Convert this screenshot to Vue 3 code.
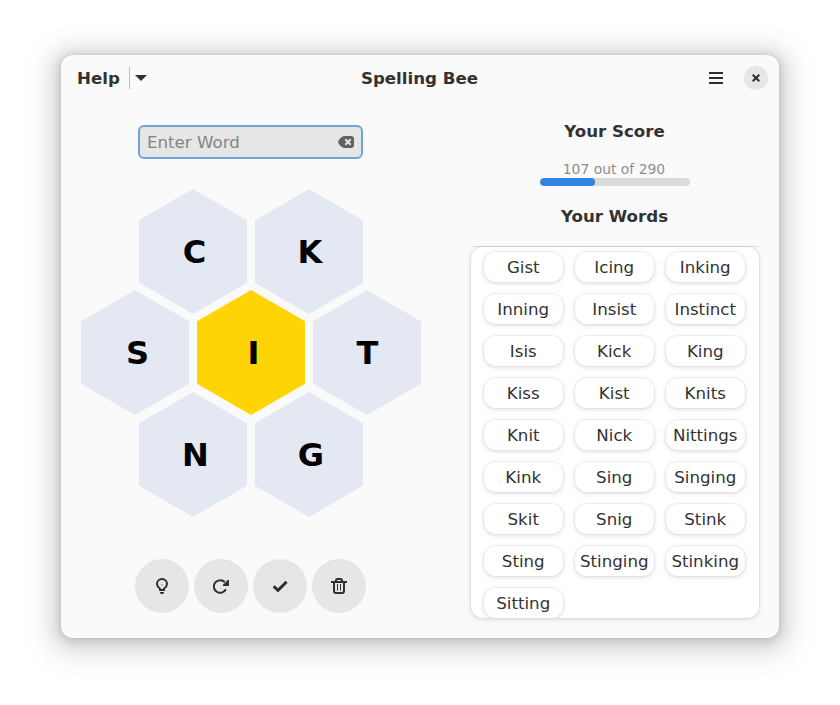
<script setup>
const rows = [
  [{ c: 'C', dx: 0 }, { c: 'K', dx: -0.5 }],
  [{ c: 'S', dx: 1 }, { c: 'I', dx: 1, center: true }, { c: 'T', dx: -1 }],
  [{ c: 'N', dx: 1 }, { c: 'G', dx: 0.5 }],
]
const words = [
  'Gist', 'Icing', 'Inking', 'Inning', 'Insist', 'Instinct', 'Isis', 'Kick', 'King',
  'Kiss', 'Kist', 'Knits', 'Knit', 'Nick', 'Nittings', 'Kink', 'Sing', 'Singing',
  'Skit', 'Snig', 'Stink', 'Sting', 'Stinging', 'Stinking', 'Sitting',
]
const score = 107
const total = 290
</script>

<template>
  <div class="desktop">
    <div class="window">
      <header class="titlebar">
        <div class="side">
          <span class="help">Help</span>
          <span class="divider"></span>
          <svg class="arrow" width="12" height="6" viewBox="0 0 12 6"><path d="M0 0h12L6 6z" fill="#2f2f2f" /></svg>
        </div>
        <h1>Spelling Bee</h1>
        <div class="side end">
          <svg class="menu" width="14" height="12" viewBox="0 0 14 12"><path d="M0 0h14v2H0zM0 5h14v2H0zM0 10h14v2H0z" fill="#2f2f2f" /></svg>
          <button class="close" aria-label="Close">
            <svg width="8" height="8" viewBox="0 0 8 8"><path d="M.7 .7l6.600 6.600M7.300 .7L.7 7.300" stroke="#2f2f2f" stroke-width="2" /></svg>
          </button>
        </div>
      </header>
      <main>
        <section class="play">
          <div class="entry">
            <span>Enter Word</span>
            <svg width="16" height="12" viewBox="0 0 16 12">
              <path d="M6 0h7a3 3 0 0 1 3 3v6a3 3 0 0 1-3 3H6C4.400 12 0 8 0 6S4.400 0 6 0z" fill="#626262" />
              <path d="M7.300 3.300l5.400 5.400M12.700 3.300l-5.400 5.400" stroke="#e6e6e6" stroke-width="2" />
            </svg>
          </div>
          <div class="comb">
            <div v-for="(row, r) in rows" :key="r" class="comb-row">
              <div v-for="l in row" :key="l.c" class="hex" :class="{ center: l.center }">
                <span :style="{ marginLeft: 2 * l.dx + 'px' }">{{ l.c }}</span>
              </div>
            </div>
          </div>
          <div class="actions">
            <button aria-label="Hint">
              <svg width="16" height="16" viewBox="0 0 16 16" fill="none" stroke="#2f2f2f" stroke-width="2">
                <path d="M6 12v-1.300C4.400 9.500 3 8.200 3 6a5 5 0 0 1 10 0c0 2.200-1.400 3.500-3 4.700V12z" />
                <path d="M6 6h4L8 8z" fill="#b9b9b9" stroke="none" />
                <path d="M6 14h4v1l-1 1H7l-1-1z" fill="#2f2f2f" stroke="none" />
              </svg>
            </button>
            <button aria-label="Shuffle">
              <svg width="16" height="16" viewBox="0 0 16 16">
                <path d="M11.900 4.200A6.350 6.350 0 1 0 12.900 11.300" fill="none" stroke="#2f2f2f" stroke-width="2" />
                <path d="M16 2v6h-6V6.500l2.500-2L14.500 2z" fill="#2f2f2f" />
              </svg>
            </button>
            <button aria-label="Submit">
              <svg width="16" height="16" viewBox="0 0 16 16"><path d="M1.700 8.200l4.300 4.200L14.600 3.800" fill="none" stroke="#2f2f2f" stroke-width="2.900" /></svg>
            </button>
            <button aria-label="Clear">
              <svg width="16" height="16" viewBox="0 0 16 16" fill="none" stroke="#2f2f2f">
                <path d="M0 4h16" stroke-width="2" />
                <path d="M5 4V2.500Q5 1 6.500 1h3Q11 1 11 2.500V4M3 4v9q0 2 2 2h6q2 0 2-2V4" stroke-width="2" />
                <path d="M6.500 6v6.500M9.500 6v6.500" />
              </svg>
            </button>
          </div>
        </section>
        <section class="results">
          <h2>Your Score</h2>
          <div class="score">{{ score }} out of {{ total }}</div>
          <div class="track"><div class="fill" :style="{ width: (score / total) * 100 + '%' }"></div></div>
          <h2 class="words-title">Your Words</h2>
          <div class="list-wrap">
            <div class="list">
              <div v-for="w in words" :key="w" class="word">{{ w }}</div>
            </div>
          </div>
        </section>
      </main>
    </div>
  </div>
</template>

<style>
body { background: #fff; overflow: hidden; }
</style>

<style scoped>
* { box-sizing: border-box; }
.desktop {
  width: 840px;
  height: 705px;
  padding: 55px 61px 67px;
  font: 16.670px/20px "DejaVu Sans", sans-serif;
  color: #323232;
}
.window {
  height: 583px;
  border-radius: 12px;
  background: #fafafa;
  box-shadow: 0 2px 8px 2px rgba(0, 0, 0, .12), 0 3px 20px 10px rgba(0, 0, 0, .1), 0 6px 32px 16px rgba(0, 0, 0, .05), 0 0 0 1px rgba(0, 0, 0, .03);
}
h1, h2 { margin: 0; font-size: 16.670px; line-height: 20px; font-weight: 700; text-align: center; }
button { border: 0; padding: 0; border-radius: 50%; background: #e6e6e6; color: inherit; display: flex; align-items: center; justify-content: center; }
.titlebar { height: 46px; display: flex; align-items: center; padding: 0 11px 0 16px; }
.side { flex: 1; display: flex; align-items: center; }
.end { justify-content: flex-end; gap: 21px; }
h1 { margin-left: -6px; padding-top: 1px; }
.help { font-weight: 700; padding-top: 1px; }
.divider { width: 1px; height: 22px; margin: 0 5px 0 9px; background: #bdbdbd; }
.close { width: 24px; height: 24px; }
main { display: flex; }
.play { width: 380px; display: flex; flex-direction: column; align-items: center; }
.entry {
  margin: 24px 2px 0 0;
  width: 225px;
  height: 34px;
  border: 2px solid #70a3d8;
  border-radius: 6px;
  background: #e6e6e6;
  color: #848484;
  display: flex;
  align-items: center;
  justify-content: space-between;
  padding: 0 7px;
}
.entry span { padding: 1px 0 0 .5px; }
.comb { margin-top: 30px; }
.comb-row { display: flex; justify-content: center; gap: 8px; height: 101px; }
.comb-row:nth-child(2) { height: 102px; }
.hex {
  width: 108px;
  height: 125px;
  clip-path: polygon(50% 0, 100% 25%, 100% 75%, 50% 100%, 0 75%, 0 25%);
  background: #e4e8f3;
  color: #000;
  font: 700 32px/38px "DejaVu Sans", sans-serif;
  display: flex;
  align-items: center;
  justify-content: center;
  padding-left: 3px;
}
.center { background: #ffd405; }
.actions { display: flex; gap: 5px; margin: 66px 2px 0 0; }
.actions button { width: 54px; height: 54px; }
.results { width: 288px; margin-left: 30px; padding-top: 21px; display: flex; flex-direction: column; align-items: center; }
.results h2 { margin-right: 1px; }
.score { margin: 19px 2px 0 0; font-size: 13.900px; line-height: 17px; color: #8d8d8d; }
.track { width: 150px; height: 8px; border-radius: 4px; background: #dbdbdb; overflow: hidden; }
.fill { height: 8px; border-radius: 4px; background: #3584e4; }
.words-title { margin-top: 21px; }
.list-wrap { margin-top: 19px; border-top: 1px solid #dedede; }
.list {
  width: 288px;
  height: 371px;
  border-radius: 12px;
  background: #fff;
  overflow: hidden;
  box-shadow: 0 0 0 1px rgba(0, 0, 0, .03), 0 1px 3px 1px rgba(0, 0, 0, .07), 0 2px 6px 2px rgba(0, 0, 0, .03);
  padding: 5px 13px 0;
  display: grid;
  grid-template-columns: repeat(3, 79px);
  grid-auto-rows: 30px;
  gap: 12px;
  align-content: start;
}
.word {
  border-radius: 12px;
  background: #fff;
  text-align: center;
  line-height: 31px;
  padding-right: .5px;
  white-space: nowrap;
  box-shadow: 0 0 0 1px rgba(0, 0, 0, .03), 0 1px 3px 1px rgba(0, 0, 0, .07), 0 2px 6px 2px rgba(0, 0, 0, .03);
}
</style>
